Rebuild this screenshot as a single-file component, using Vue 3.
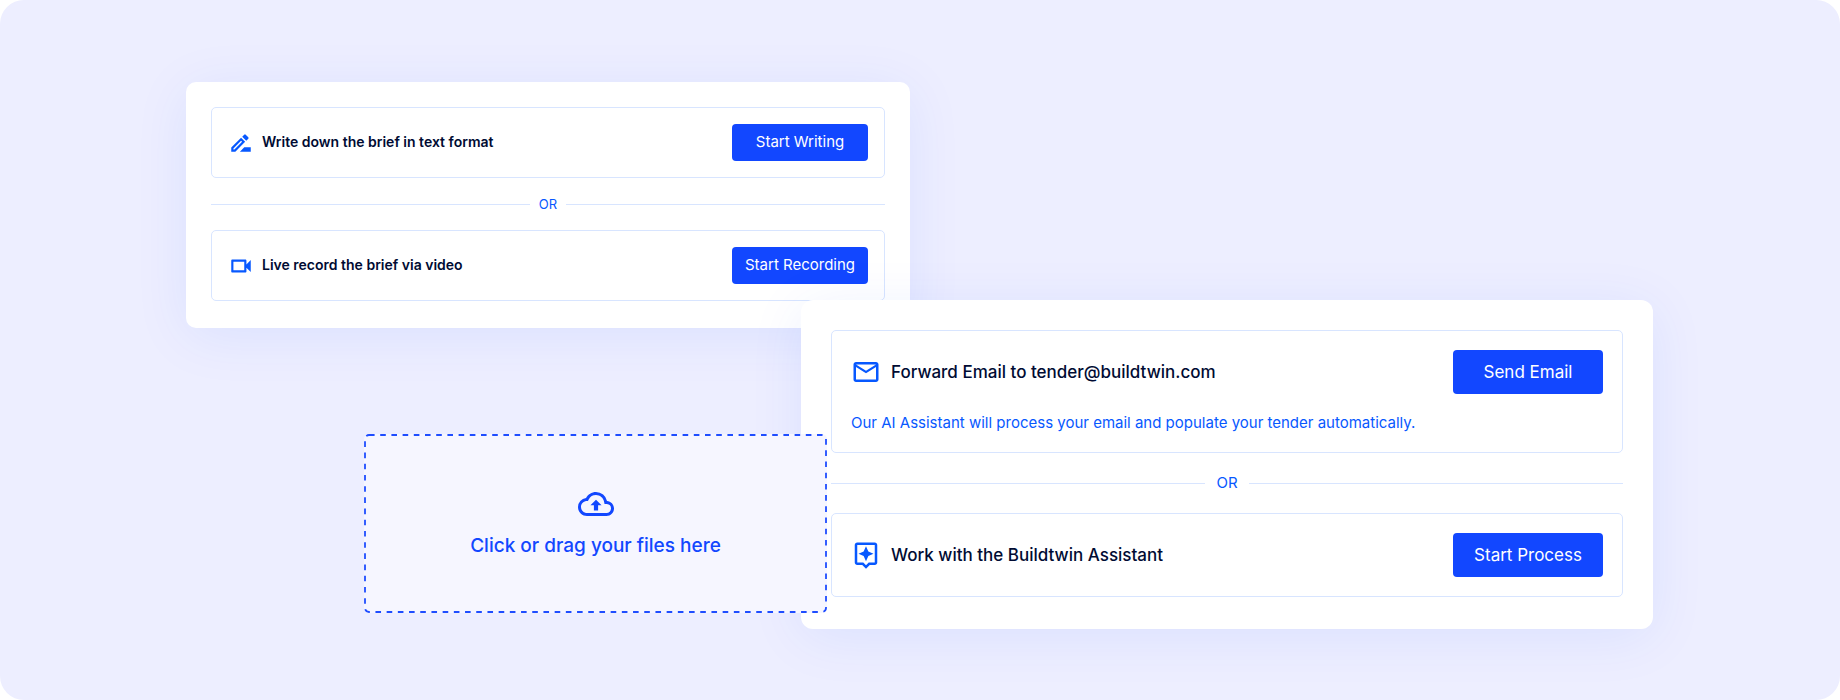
<script setup>
const icons = {
  write: 'M15 16l-4 4h10v-4zM12.06 7.19 3 16.25V20h3.75l9.06-9.06zM5.92 18H5v-.92l7.06-7.06.92.92zM18.71 8.04a1 1 0 0 0 0-1.41l-2.34-2.34a1 1 0 0 0-1.41 0l-1.83 1.83 3.75 3.75z',
  video: 'M15 8v8H5V8h10m1-2H4c-.55 0-1 .45-1 1v10c0 .55.45 1 1 1h12c.55 0 1-.45 1-1v-3.500l4 4v-11l-4 4V7c0-.55-.45-1-1-1z',
  mail: 'M22 6c0-1.100-.9-2-2-2H4c-1.100 0-2 .9-2 2v12c0 1.100.9 2 2 2h16c1.100 0 2-.9 2-2zm-2 0-8 5-8-5zm0 12H4V8l8 5 8-5z',
  assistant: 'M19 2H5c-1.110 0-2 .9-2 2v14c0 1.100.89 2 2 2h4l3 3 3-3h4c1.100 0 2-.9 2-2V4c0-1.100-.9-2-2-2zm0 16h-4.830L12 20.170 9.830 18H5V4h14zm-7-1 1.880-4.120L18 11l-4.120-1.880L12 5l-1.880 4.120L6 11l4.120 1.880z',
}

const panels = [
  {
    name: 'brief',
    options: [
      { icon: icons.write, title: 'Write down the brief in text format', action: 'Start Writing' },
      { icon: icons.video, title: 'Live record the brief via video', action: 'Start Recording' },
    ],
  },
  {
    name: 'tender',
    options: [
      {
        icon: icons.mail,
        title: 'Forward Email to tender@buildtwin.com',
        action: 'Send Email',
        note: 'Our AI Assistant will process your email and populate your tender automatically.',
      },
      { icon: icons.assistant, title: 'Work with the Buildtwin Assistant', action: 'Start Process' },
    ],
  },
]
</script>

<template>
  <main class="stage">
    <section v-for="panel in panels" :key="panel.name" class="panel" :class="panel.name">
      <template v-for="(option, i) in panel.options" :key="option.title">
        <div v-if="i > 0" class="divider"><span>OR</span></div>
        <article class="option">
          <div class="row">
            <svg class="icon" viewBox="0 0 24 24" aria-hidden="true"><path :d="option.icon" /></svg>
            <h2 class="title">{{ option.title }}</h2>
            <button type="button" class="action">{{ option.action }}</button>
          </div>
          <p v-if="option.note" class="note">{{ option.note }}</p>
        </article>
      </template>
    </section>

    <button type="button" class="drop">
      <svg class="outline" aria-hidden="true"><rect x="1" y="1" rx="4" /></svg>
      <svg class="cloud" viewBox="0 4 24 16" aria-hidden="true">
        <path d="M19.350 10.040A7.490 7.490 0 0 0 12 4C9.110 4 6.600 5.640 5.350 8.040A5.994 5.994 0 0 0 0 14c0 3.310 2.690 6 6 6h13c2.760 0 5-2.240 5-5 0-2.640-2.050-4.780-4.650-4.960zM19 18H6c-2.210 0-4-1.790-4-4 0-2.050 1.530-3.760 3.560-3.970l1.070-.11.5-.95A5.469 5.469 0 0 1 12 6c2.620 0 4.880 1.860 5.390 4.430l.3 1.500 1.530.11A2.980 2.980 0 0 1 22 15c0 1.650-1.350 3-3 3z" />
        <path d="M12 9.100 8.300 12.800h2.300v3.500h2.800v-3.500h2.300z" />
      </svg>
      <span>Click or drag your files here</span>
    </button>
  </main>
</template>

<style>
body {
  margin: 0;
  background: #fff;
}
</style>

<style scoped>
.stage {
  box-sizing: border-box;
  display: grid;
  grid-template-columns:
    minmax(0, 186fr) minmax(0, 178fr) minmax(0, 437fr) minmax(0, 26fr)
    minmax(0, 83fr) minmax(0, 743fr) minmax(0, 187fr);
  grid-template-rows: 218px 28px 106px auto auto;
  align-content: start;
  min-height: 100vh;
  padding: 82px 0 0;
  border-radius: 24px;
  background: #edeeff;
  font-family: Inter, "Liberation Sans", sans-serif;
  color: #000b33;
}

.panel {
  align-self: start;
  background: #fff;
  box-shadow: 0 8px 56px rgba(18, 71, 255, 0.08);
}

.brief {
  grid-column: 2 / 6;
  grid-row: 1 / 3;
  padding: 25px 25px 27px;
  border-radius: 10px;
}

.tender {
  grid-column: 4 / 7;
  grid-row: 2 / 6;
  padding: 30px 30px 32px;
  border-radius: 12px;
}

.option {
  border: 1px solid #d8e5ff;
  border-radius: 5px;
}

.brief .option {
  padding: 16px;
}

.tender .option {
  padding: 19px;
}

.row {
  display: flex;
  align-items: center;
}

.icon {
  flex: none;
  fill: #0758ff;
}

.brief .icon {
  width: 26px;
  height: 26px;
}

.tender .icon {
  width: 30px;
  height: 30px;
}

.title {
  flex: 1;
  margin: 0;
  font-weight: 500;
}

.brief .title {
  margin-left: 8px;
  padding-bottom: 2px;
  font-size: 14px;
  font-weight: 600;
  line-height: 20px;
}

.tender .title {
  margin-left: 10px;
  font-size: 17px;
  line-height: 24px;
}

.action {
  padding: 0;
  border: 0;
  border-radius: 4px;
  background: #1247ff;
  color: #fff;
  font-family: inherit;
  cursor: pointer;
}

.brief .action {
  width: 136px;
  height: 37px;
  padding-bottom: 2px;
  font-size: 15px;
}

.tender .action {
  width: 150px;
  height: 44px;
  font-size: 17px;
}

.note {
  margin: 19px 0 0;
  color: #0758ff;
  font-size: 15px;
  line-height: 20px;
}

.divider {
  display: flex;
  align-items: center;
  color: #0758ff;
}

.divider::before,
.divider::after {
  content: "";
  flex: 1;
  height: 1px;
  background: #d8e5ff;
}

.brief .divider {
  gap: 9px;
  height: 52px;
  font-size: 13px;
}

.tender .divider {
  gap: 11px;
  height: 60px;
  font-size: 15px;
}

.divider span {
  padding-bottom: 1px;
}

.drop {
  position: relative;
  z-index: 1;
  grid-column: 3 / 5;
  grid-row: 4;
  display: flex;
  flex-direction: column;
  align-items: center;
  gap: 17px;
  padding: 58px 0 54px;
  border: 0;
  border-radius: 5px;
  background: #f6f6ff;
  color: #1247ff;
  font-family: inherit;
  font-size: 19px;
  font-weight: 500;
  line-height: 26px;
  cursor: pointer;
}

.outline {
  position: absolute;
  inset: 0;
  width: 100%;
  height: 100%;
}

.outline rect {
  width: calc(100% - 2px);
  height: calc(100% - 2px);
  fill: none;
  stroke: #1f4dff;
  stroke-width: 1.8;
  stroke-dasharray: 5.6 5.6;
}

.cloud {
  width: 36px;
  height: 24px;
  fill: #1247ff;
}
</style>
